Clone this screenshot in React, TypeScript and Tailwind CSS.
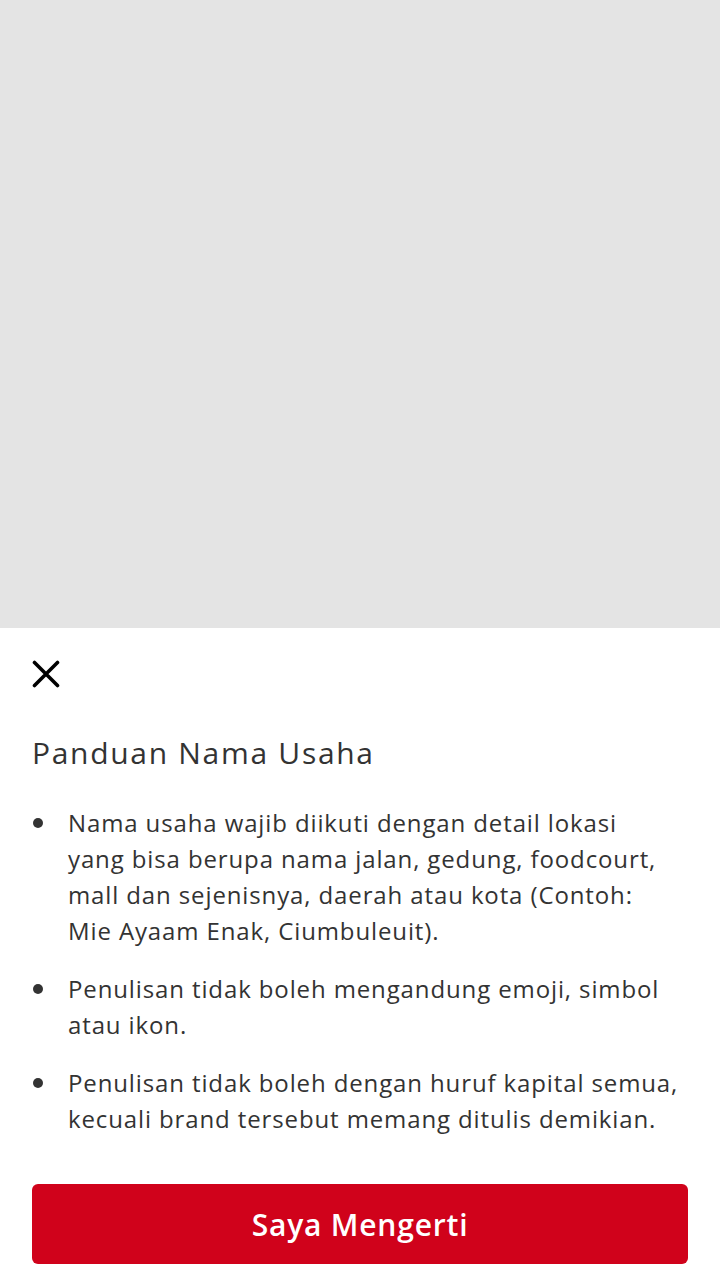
const items = [
  'Nama usaha wajib diikuti dengan detail lokasi yang bisa berupa nama jalan, gedung, foodcourt, mall dan sejenisnya, daerah atau kota (Contoh: Mie Ayaam Enak, Ciumbuleuit).',
  'Penulisan tidak boleh mengandung emoji, simbol atau ikon.',
  'Penulisan tidak boleh dengan huruf kapital semua, kecuali brand tersebut memang ditulis demikian.',
];

export default function App() {
  return (
    <div className="flex h-[1280px] w-[720px] flex-col bg-[#e4e4e4] font-['Open_Sans',sans-serif] text-[#333333]">
      {/* backdrop */}
      <div className="h-[628px] shrink-0" />

      {/* bottom sheet */}
      <div className="flex flex-1 flex-col bg-white px-8 pt-8">
        <button className="flex h-7 w-7 items-center justify-center">
          <svg viewBox="0 0 28 28" className="h-7 w-7" fill="none" stroke="#000" strokeWidth={3.6} strokeLinecap="round">
            <path d="M2.5 2.5L25.5 25.5M25.5 2.5L2.5 25.5" />
          </svg>
        </button>

        <h2 className="mt-[47px] text-[30px] leading-9 font-[530] tracking-[1.7px]">Panduan Nama Usaha</h2>

        <ul className="mt-[34px] flex flex-col gap-[22px] pr-[9px]">
          {items.map((t) => (
            <li key={t} className="flex items-start">
              <span className="mt-[13px] ml-[1px] h-[10px] w-[10px] shrink-0 rounded-full bg-[#333333]" />
              <p className="ml-[25px] text-[24px] leading-9 tracking-[0.88px]">{t}</p>
            </li>
          ))}
        </ul>

        <button className="mt-[47px] h-20 w-full rounded-md bg-[#d0021b] text-[30px] font-semibold tracking-[0.8px] text-white">
          Saya Mengerti
        </button>
      </div>
    </div>
  );
}
